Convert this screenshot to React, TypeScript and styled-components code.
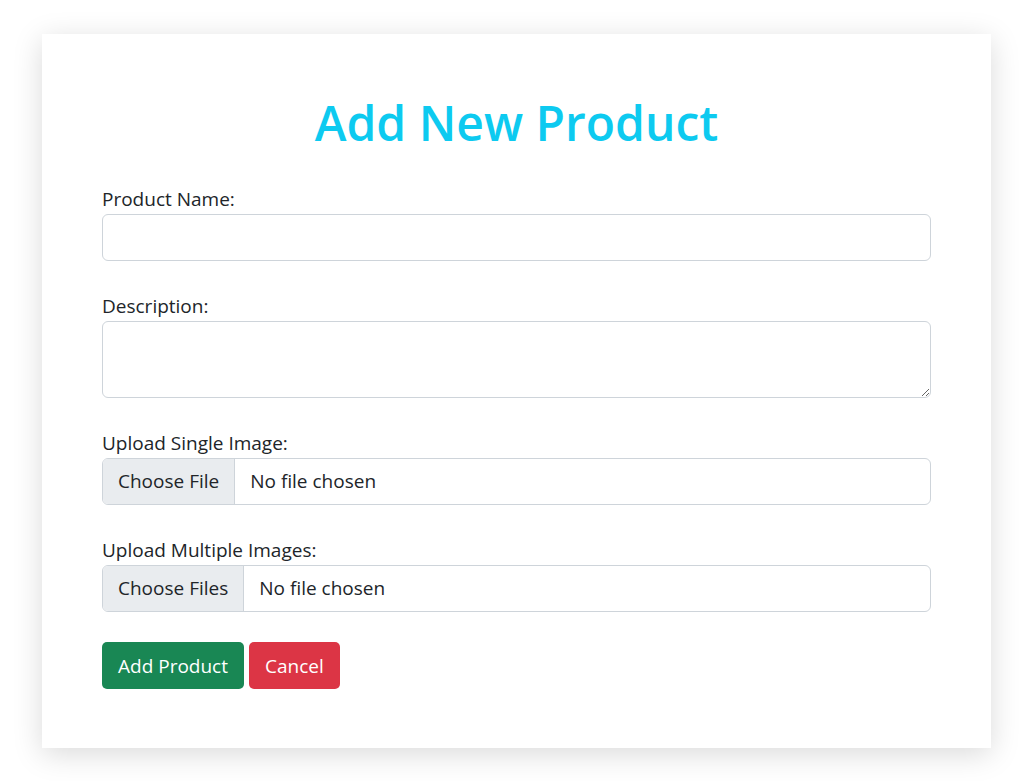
import React, { useState } from "react";
import styled, { createGlobalStyle } from "styled-components";

const GlobalStyle = createGlobalStyle`
  * {
    box-sizing: border-box;
  }
  body {
    margin: 0;
    background: #ffffff;
    color: #212529;
    font-family: "Open Sans", "Noto Sans", "Liberation Sans", sans-serif;
  }
`;

const Page = styled.div`
  padding: 34px 30px 40px 42px;
`;

const Card = styled.form`
  width: 949px;
  background: #ffffff;
  padding: 60px 60px 59px;
  box-shadow: 0 6px 28px rgba(0, 0, 0, 0.15);
`;

const Title = styled.h1`
  margin: 0 0 32px;
  text-align: center;
  color: #0dcaf0;
  font-size: 48px;
  font-weight: 600;
  line-height: 1.2;
`;

const Group = styled.div`
  margin-bottom: 30px;
`;

const Label = styled.label`
  display: block;
  font-size: 19px;
  line-height: 30px;
`;

const TextInput = styled.input`
  display: block;
  width: 100%;
  height: 47px;
  padding: 8px 16px;
  font: inherit;
  font-size: 19px;
  color: #212529;
  border: 1px solid #ced4da;
  border-radius: 6px;
  outline: none;
`;

const TextArea = styled.textarea`
  display: block;
  width: 100%;
  height: 77px;
  padding: 8px 16px;
  font: inherit;
  font-size: 19px;
  color: #212529;
  border: 1px solid #ced4da;
  border-radius: 6px;
  outline: none;
  resize: vertical;
`;

const FileField = styled.label`
  display: flex;
  align-items: stretch;
  height: 47px;
  border: 1px solid #ced4da;
  border-radius: 6px;
  overflow: hidden;
  font-size: 19px;
  cursor: pointer;

  input {
    display: none;
  }
`;

const FileButton = styled.span`
  display: flex;
  align-items: center;
  padding: 0 15px;
  background: #e9ecef;
  border-right: 1px solid #ced4da;
  color: #212529;
`;

const FileName = styled.span`
  display: flex;
  align-items: center;
  padding: 0 15px;
  color: #212529;
`;

const Actions = styled.div`
  display: flex;
  gap: 5px;
`;

const Button = styled.button<{ $variant: "success" | "danger" }>`
  height: 47px;
  padding: 2px 16px 0;
  font: inherit;
  font-size: 19px;
  color: #ffffff;
  border: none;
  border-radius: 5px;
  cursor: pointer;
  background: ${(p) => (p.$variant === "success" ? "#198754" : "#dc3545")};
`;

const FilePicker: React.FC<{ multiple?: boolean }> = ({ multiple }) => {
  const [names, setNames] = useState("No file chosen");

  const handleChange = (e: React.ChangeEvent<HTMLInputElement>) => {
    const files = e.target.files;
    if (!files || files.length === 0) setNames("No file chosen");
    else if (files.length === 1) setNames(files[0].name);
    else setNames(`${files.length} files`);
  };

  return (
    <FileField>
      <FileButton>{multiple ? "Choose Files" : "Choose File"}</FileButton>
      <FileName>{names}</FileName>
      <input type="file" accept="image/*" multiple={multiple} onChange={handleChange} />
    </FileField>
  );
};

const App: React.FC = () => {
  return (
    <Page>
      <GlobalStyle />
      <Card onSubmit={(e) => e.preventDefault()}>
        <Title>Add New Product</Title>

        <Group>
          <Label htmlFor="name">Product Name:</Label>
          <TextInput id="name" type="text" />
        </Group>

        <Group>
          <Label htmlFor="description">Description:</Label>
          <TextArea id="description" />
        </Group>

        <Group>
          <Label>Upload Single Image:</Label>
          <FilePicker />
        </Group>

        <Group>
          <Label>Upload Multiple Images:</Label>
          <FilePicker multiple />
        </Group>

        <Actions>
          <Button type="submit" $variant="success">
            Add Product
          </Button>
          <Button type="button" $variant="danger">
            Cancel
          </Button>
        </Actions>
      </Card>
    </Page>
  );
};

export default App;
